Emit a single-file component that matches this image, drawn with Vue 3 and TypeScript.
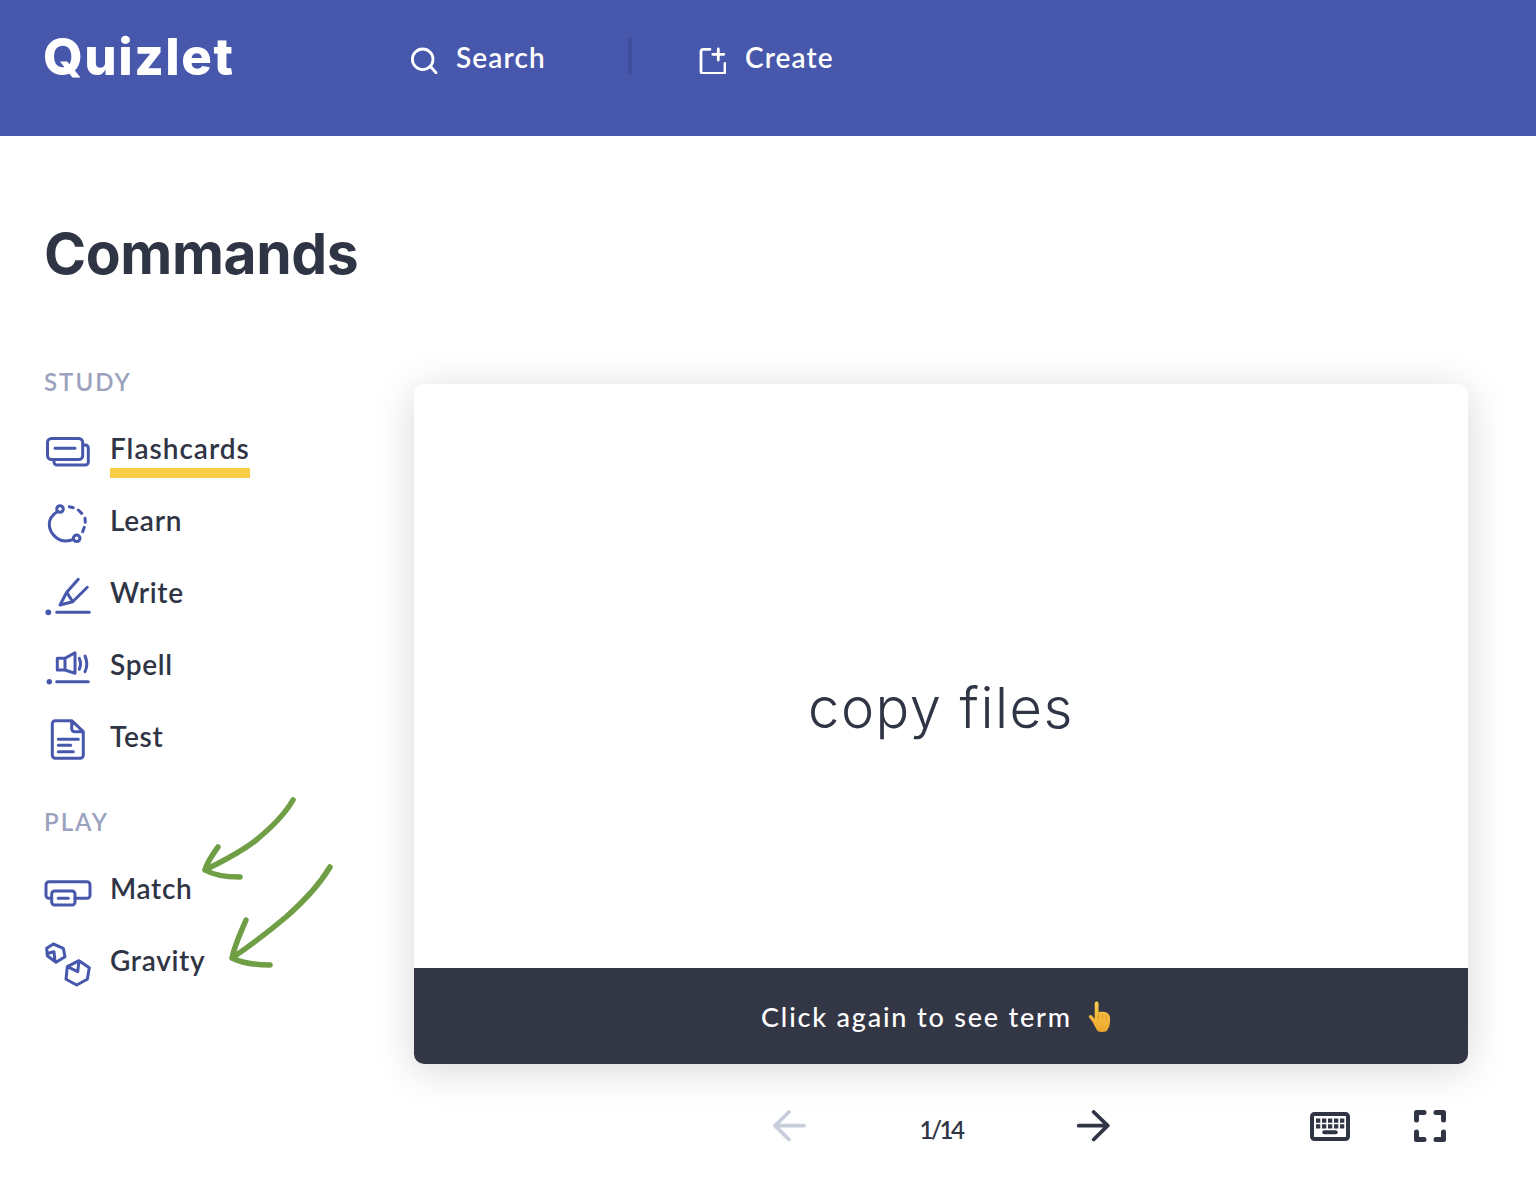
<template>
  <div class="page">
    <header class="topbar">
      <div class="logo">Quizlet</div>
      <a class="top-link search-link">
        <svg class="top-icon" viewBox="0 0 28 28" fill="none" stroke="#fff" stroke-width="2.8" stroke-linecap="round">
          <circle cx="12.7" cy="13.3" r="10.3" />
          <path d="M20.5 20.5 26 26.7" />
        </svg>
        <span>Search</span>
      </a>
      <div class="top-divider" />
      <a class="top-link create-link">
        <svg class="top-icon" viewBox="0 0 28 28" fill="none" stroke="#fff" stroke-width="2.8" stroke-linecap="round" stroke-linejoin="round">
          <path d="M12 3.3H5a2 2 0 0 0-2 2v20a2 2 0 0 0 2 2h20a2 2 0 0 0 2-2v-8" />
          <path d="M20.3 3v11M14.8 8.3h11" />
        </svg>
        <span>Create</span>
      </a>
    </header>

    <main class="content">
      <h1 class="title">Commands</h1>
      <div class="columns">
        <aside class="sidebar">
          <div v-for="group in groups" :key="group.label" class="nav-group">
            <div class="nav-label">{{ group.label }}</div>
            <div v-for="item in group.items" :key="item.name" class="nav-item">
              <svg
                class="nav-icon"
                viewBox="0 0 48 48"
                fill="none"
                stroke="#4757ab"
                stroke-width="3"
                stroke-linecap="round"
                stroke-linejoin="round"
              >
                <template v-if="item.name === 'Flashcards'">
                  <rect x="3.5" y="10.5" width="35.2" height="21" rx="4" />
                  <path d="M11 20.3h20M39 17h2.3a3 3 0 0 1 3 3v14a3 3 0 0 1-3 3H13a3 3 0 0 1-3-3v-2.5" />
                </template>
                <template v-else-if="item.name === 'Learn'">
                  <circle cx="16" cy="9" r="3.3" />
                  <circle cx="32.7" cy="38.3" r="3.3" />
                  <path d="M13.500 11.500C8 15 5.300 19 5.300 24 5.300 33 13 41 22 41c2.500 0 5-.5 7.400-1.600M25.300 6.700l4 1M34.300 10l3.400 3.300M41 18.300l.3 4M40.300 27.300l-1.600 4.400" />
                </template>
                <template v-else-if="item.name === 'Write'">
                  <path d="M34.3 7.3 22.7 20.3 16 33l12.7-3.3 14.6-14.4M22.7 20.3l6 9.4M12.7 40.3h32.6" />
                  <circle cx="4.3" cy="40.3" r="2.9" fill="#4757ab" stroke="none" />
                </template>
                <template v-else-if="item.name === 'Spell'">
                  <path d="M21 14.3h-7.7V26H21l10 3.3V8.7zM21 14.3V26M35.3 14.3c1.6 3.6 1.6 7.4 0 11M41 12c2.4 5.2 2.4 10.5 0 15.7M12.7 37.7h31.6" />
                  <circle cx="5.3" cy="37.7" r="2.7" fill="#4757ab" stroke="none" />
                </template>
                <template v-else-if="item.name === 'Test'">
                  <path d="M27.7 4.7H11.3a3 3 0 0 0-3 3v31.6a3 3 0 0 0 3 3h25a3 3 0 0 0 3-3V15.7zM27.7 4.7v8a3 3 0 0 0 3 3h8.6M14.3 23.3h20M14.3 29.3h12.4M14.3 35.7h15" />
                </template>
                <template v-else-if="item.name === 'Match'">
                  <path d="M7.7 30.3H5a3 3 0 0 1-3-3V16.7a3 3 0 0 1 3-3h38a3 3 0 0 1 3 3v10.6a3 3 0 0 1-3 3H31" />
                  <rect x="7.7" y="23" width="23.3" height="14" rx="3" />
                  <path d="M14.3 30.3h10" />
                </template>
                <template v-else>
                  <path d="M9.3 4l10 4.3 1.7 8.4-9 5.6-8.7-6.6-.6-7.4zM4.3 13.3l5.7-1.6 1 10" />
                  <path d="M35 20.7l10.3 7-2 11.6L32.7 45 22 39.3l1.3-12.6zM23.3 26.7l10.4 5 1.3-11" />
                </template>
              </svg>
              <span class="nav-text" :class="{ active: item.name === 'Flashcards' }">{{ item.name }}</span>
            </div>
          </div>
        </aside>

        <section class="player">
          <div class="card">
            <div class="card-face">copy files</div>
            <div class="card-foot">
              <span>Click again to see term</span>
              <svg class="hand" viewBox="0 0 24 34">
                <defs>
                  <linearGradient id="hand-fill" x1="0" y1="0" x2="0" y2="1">
                    <stop offset="0" stop-color="#fbcf4e" />
                    <stop offset="1" stop-color="#eca52c" />
                  </linearGradient>
                </defs>
                <path
                  d="M7 3.2c0-2.6 4-2.6 4 0v9.3c3-.7 6.500-.5 8.700.7 2.300 1.300 3.300 3.300 3.300 6.300 0 3-.2 5.500-.8 7.500-.6 2-1.700 4-3 5.500-2.500 1-6.500 1-9 0-1.500-2.500-3.500-6-5.200-9.500L1 17.800c-.8-1.800 1.800-3.300 3-1.800l3 3.500z"
                  fill="url(#hand-fill)"
                />
                <path d="M11 14v5M15 14.200v5M19 15.200v4.500" stroke="#c9821f" stroke-width=".7" fill="none" stroke-linecap="round" />
              </svg>
            </div>
          </div>

          <div class="controls">
            <div />
            <div class="pager">
              <svg class="arrow" viewBox="0 0 36 32" fill="none" stroke="#c9cedd" stroke-width="3.800" stroke-linecap="round" stroke-linejoin="round">
                <path d="M33 15.700H4M18 2 4 15.700 18 29.500" />
              </svg>
              <span class="count">1/14</span>
              <svg class="arrow" viewBox="0 0 36 32" fill="none" stroke="#303545" stroke-width="3.800" stroke-linecap="round" stroke-linejoin="round">
                <path d="M3.700 15.700h29M18.700 2l14 13.700-14 13.800" />
              </svg>
            </div>
            <div class="tools">
              <svg class="keyboard" viewBox="0 0 40 29">
                <rect x="2" y="2" width="36" height="25" rx="2.500" fill="#fff" stroke="#303545" stroke-width="4" />
                <path
                  d="M6 6.500h4.300v4.300H6zM12 6.500h4.300v4.300H12zM18 6.500h4.300v4.300H18zM24 6.500h4.300v4.300H24zM30 6.500h4.300v4.300H30zM6 12.300h4.300v4.300H6zM12 12.300h4.300v4.300H12zM18 12.300h4.300v4.300H18zM24 12.300h4.300v4.300H24zM30 12.300h4.300v4.300H30z"
                  fill="#303545"
                />
                <rect x="12.300" y="18.300" width="15.400" height="4" rx="2" fill="#303545" />
              </svg>
              <svg class="fullscreen" viewBox="0 0 32 32" fill="none" stroke="#303545" stroke-width="5" stroke-linecap="round" stroke-linejoin="round">
                <path d="M2.500 10V2.500H10M22 2.500h7.500V10M29.500 22v7.500H22M10 29.500H2.500V22" />
              </svg>
            </div>
          </div>
        </section>
      </div>
    </main>

    <!-- hand-drawn annotation on top of the screenshot -->
    <svg class="scribble" viewBox="0 0 1536 1182" fill="none" stroke="#6f9e45" stroke-width="5.500" stroke-linecap="round" stroke-linejoin="round">
      <path d="M293 800c-8 14-22 28-38 41-17 13-34 21-50 29 2-8 8-16 13-23M205 870c10 6 22 7 35 7" />
      <path d="M330 867c-12 20-28 36-44 50-20 17-38 30-54 41 3-14 9-26 14-38M232 958c12 6 25 7 38 7" />
    </svg>
  </div>
</template>

<script setup lang="ts">
interface NavGroup {
  label: string
  items: { name: string }[]
}

const groups: NavGroup[] = [
  {
    label: 'STUDY',
    items: [{ name: 'Flashcards' }, { name: 'Learn' }, { name: 'Write' }, { name: 'Spell' }, { name: 'Test' }],
  },
  {
    label: 'PLAY',
    items: [{ name: 'Match' }, { name: 'Gravity' }],
  },
]
</script>

<style>
html,
body {
  margin: 0;
  background: #fff;
}
</style>

<style scoped>
.page {
  position: relative;
  width: 1536px;
  height: 1182px;
  overflow: hidden;
  font-family: Lato, "Liberation Sans", sans-serif;
  color: #303545;
  background: #fff;
}

.topbar {
  height: 136px;
  box-sizing: border-box;
  background: #4757ab;
  display: flex;
  align-items: flex-start;
  padding: 37px 0 0 44px;
  color: #fff;
}

.logo {
  width: 366px;
  margin-left: -1px;
  margin-right: 1px;
  font-family: Inter, Lato, sans-serif;
  font-size: 51px;
  line-height: 40px;
  font-weight: 800;
  letter-spacing: 1.5px;
}

.top-link {
  display: flex;
  align-items: center;
  height: 40px;
  font-size: 28px;
  font-weight: 600;
  letter-spacing: 1.1px;
  gap: 18px;
}

.search-link {
  width: 218px;
}

.create-link {
  gap: 19px;
}

.top-icon {
  width: 28px;
  height: 28px;
  margin-top: 6px;
}

.top-divider {
  width: 4px;
  height: 38px;
  background: #3e4e9b;
  margin-right: 66px;
}

.content {
  padding: 82px 68px 0 44px;
}

.title {
  margin: 0;
  font-family: Inter, Lato, sans-serif;
  font-size: 57px;
  line-height: 72px;
  font-weight: 700;
  letter-spacing: -0.4px;
}

.columns {
  display: grid;
  grid-template-columns: 370px 1054px;
  margin-top: 70px;
}

.sidebar {
  display: flex;
  flex-direction: column;
  gap: 34px;
  padding-top: 8px;
}

.nav-label {
  font-size: 24px;
  line-height: 28px;
  font-weight: 600;
  letter-spacing: 2px;
  color: #9aa2bd;
  margin-bottom: 18px;
}

.nav-item {
  height: 72px;
  display: flex;
  align-items: center;
  gap: 18px;
}

.nav-icon {
  width: 48px;
  height: 48px;
  flex: none;
  margin-top: 4px;
}

.nav-text {
  position: relative;
  top: -2px;
  font-size: 28px;
  line-height: 34px;
  font-weight: 600;
  letter-spacing: 0.7px;
}

.nav-text.active {
  letter-spacing: 1px;
}

.nav-text.active::after {
  content: "";
  position: absolute;
  left: 0;
  right: 0;
  top: 37px;
  height: 10px;
  background: #f8cc47;
}

.card {
  width: 1054px;
  margin-top: 24px;
  border-radius: 10px;
  overflow: hidden;
  box-shadow: 0 6px 40px rgba(0, 0, 0, 0.16);
  background: #fff;
}

.card-face {
  height: 584px;
  box-sizing: border-box;
  padding-top: 64px;
  display: flex;
  align-items: center;
  justify-content: center;
  font-family: Inter, Lato, sans-serif;
  font-size: 56px;
  font-weight: 300;
  letter-spacing: 1.5px;
}

.card-foot {
  height: 96px;
  box-sizing: border-box;
  padding-right: 10px;
  background: #333645;
  color: #fff;
  display: flex;
  align-items: center;
  justify-content: center;
  gap: 16px;
  font-size: 27px;
  font-weight: 500;
  letter-spacing: 1.8px;
}

.hand {
  width: 23px;
  height: 33px;
}

.controls {
  display: grid;
  grid-template-columns: 1fr auto 1fr;
  align-items: center;
  margin-top: 46px;
}

.pager {
  display: flex;
  align-items: center;
  gap: 112px;
}

.arrow {
  width: 36px;
  height: 32px;
  flex: none;
}

.count {
  width: 44px;
  text-align: center;
  white-space: nowrap;
  font-size: 24px;
  line-height: 32px;
  font-weight: 600;
  letter-spacing: -2.5px;
  position: relative;
  top: 4px;
}

.tools {
  display: flex;
  justify-content: flex-end;
  align-items: center;
  gap: 64px;
  padding-right: 22px;
}

.keyboard {
  width: 40px;
  height: 29px;
}

.fullscreen {
  width: 32px;
  height: 32px;
}

.scribble {
  position: absolute;
  inset: 0;
  width: 1536px;
  height: 1182px;
  pointer-events: none;
}
</style>
